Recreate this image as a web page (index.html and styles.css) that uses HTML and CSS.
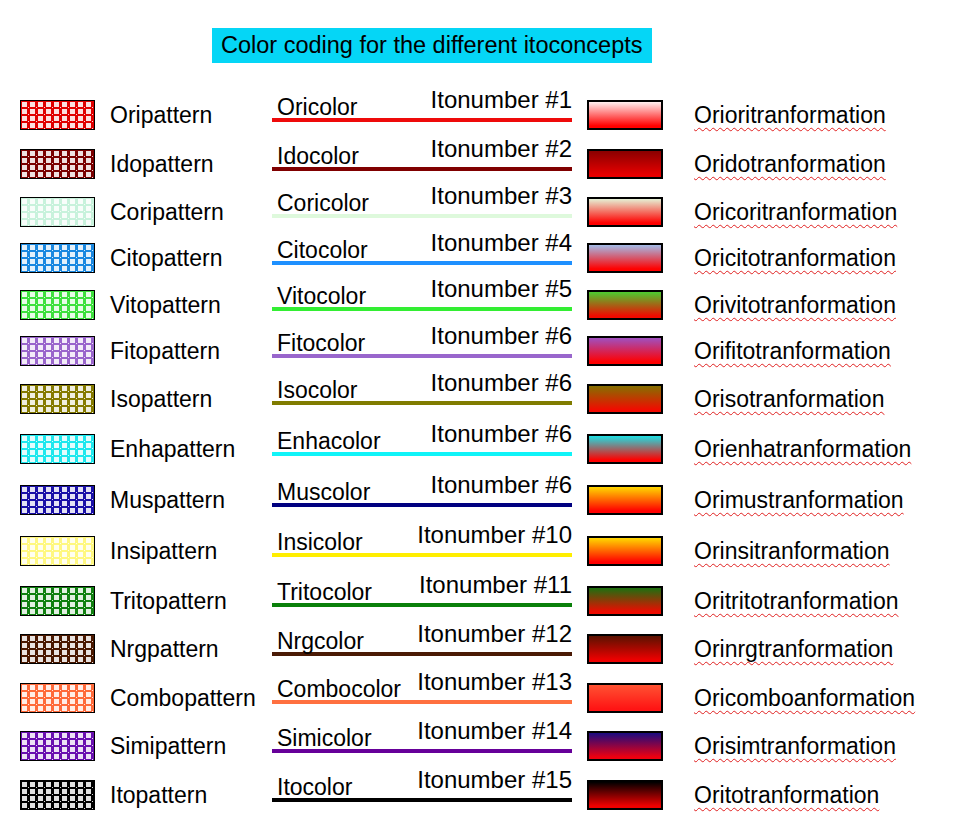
FILE: index.html
```html
<!DOCTYPE html>
<html lang="en">
<head>
<meta charset="utf-8">
<title>Color coding for the different itoconcepts</title>
<link rel="stylesheet" href="styles.css">
</head>
<body>
<div class="page">
  <h1 class="title">Color coding for the different itoconcepts</h1>
  <div class="legend">
    <div class="row c-ori"><div class="pat"></div><div class="name">Oripattern</div><div class="mid"><span class="cname">Oricolor</span><span class="num">Itonumber #1</span></div><div class="gcell"><div class="grad"></div></div><div class="tr">Orioritranformation</div></div>
    <div class="row c-ido"><div class="pat"></div><div class="name">Idopattern</div><div class="mid"><span class="cname">Idocolor</span><span class="num">Itonumber #2</span></div><div class="gcell"><div class="grad"></div></div><div class="tr">Oridotranformation</div></div>
    <div class="row c-cori"><div class="pat"></div><div class="name">Coripattern</div><div class="mid"><span class="cname">Coricolor</span><span class="num">Itonumber #3</span></div><div class="gcell"><div class="grad"></div></div><div class="tr">Oricoritranformation</div></div>
    <div class="row c-cito"><div class="pat"></div><div class="name">Citopattern</div><div class="mid"><span class="cname">Citocolor</span><span class="num">Itonumber #4</span></div><div class="gcell"><div class="grad"></div></div><div class="tr">Oricitotranformation</div></div>
    <div class="row c-vito"><div class="pat"></div><div class="name">Vitopattern</div><div class="mid"><span class="cname">Vitocolor</span><span class="num">Itonumber #5</span></div><div class="gcell"><div class="grad"></div></div><div class="tr">Orivitotranformation</div></div>
    <div class="row c-fito"><div class="pat"></div><div class="name">Fitopattern</div><div class="mid"><span class="cname">Fitocolor</span><span class="num">Itonumber #6</span></div><div class="gcell"><div class="grad"></div></div><div class="tr">Orifitotranformation</div></div>
    <div class="row c-iso"><div class="pat"></div><div class="name">Isopattern</div><div class="mid"><span class="cname">Isocolor</span><span class="num">Itonumber #6</span></div><div class="gcell"><div class="grad"></div></div><div class="tr">Orisotranformation</div></div>
    <div class="row c-enha"><div class="pat"></div><div class="name">Enhapattern</div><div class="mid"><span class="cname">Enhacolor</span><span class="num">Itonumber #6</span></div><div class="gcell"><div class="grad"></div></div><div class="tr">Orienhatranformation</div></div>
    <div class="row c-mus"><div class="pat"></div><div class="name">Muspattern</div><div class="mid"><span class="cname">Muscolor</span><span class="num">Itonumber #6</span></div><div class="gcell"><div class="grad"></div></div><div class="tr">Orimustranformation</div></div>
    <div class="row c-insi"><div class="pat"></div><div class="name">Insipattern</div><div class="mid"><span class="cname">Insicolor</span><span class="num">Itonumber #10</span></div><div class="gcell"><div class="grad"></div></div><div class="tr">Orinsitranformation</div></div>
    <div class="row c-trito"><div class="pat"></div><div class="name">Tritopattern</div><div class="mid"><span class="cname">Tritocolor</span><span class="num">Itonumber #11</span></div><div class="gcell"><div class="grad"></div></div><div class="tr">Oritritotranformation</div></div>
    <div class="row c-nrg"><div class="pat"></div><div class="name">Nrgpattern</div><div class="mid"><span class="cname">Nrgcolor</span><span class="num">Itonumber #12</span></div><div class="gcell"><div class="grad"></div></div><div class="tr">Orinrgtranformation</div></div>
    <div class="row c-combo"><div class="pat"></div><div class="name">Combopattern</div><div class="mid"><span class="cname">Combocolor</span><span class="num">Itonumber #13</span></div><div class="gcell"><div class="grad"></div></div><div class="tr">Oricomboanformation</div></div>
    <div class="row c-simi"><div class="pat"></div><div class="name">Simipattern</div><div class="mid"><span class="cname">Simicolor</span><span class="num">Itonumber #14</span></div><div class="gcell"><div class="grad"></div></div><div class="tr">Orisimtranformation</div></div>
    <div class="row c-ito"><div class="pat"></div><div class="name">Itopattern</div><div class="mid"><span class="cname">Itocolor</span><span class="num">Itonumber #15</span></div><div class="gcell"><div class="grad"></div></div><div class="tr">Oritotranformation</div></div>
  </div>
</div>
</body>
</html>
```

FILE: styles.css
```css
html, body {
  margin: 0;
  background: #ffffff;
}

body {
  font-family: "Liberation Sans", Arial, Helvetica, sans-serif;
  color: #000;
}

.page {
  padding-top: 28px;
}

.title {
  margin: 0 0 27px 212px;
  width: 440px;
  height: 35px;
  box-sizing: border-box;
  padding-left: 9px;
  background: #05d6f6;
  font-size: 23.5px;
  font-weight: normal;
  line-height: 35px;
  white-space: nowrap;
}

.legend {
  display: grid;
  margin-left: 20px;
  grid-template-columns: 75px 177px 300px 122px 1fr;
  grid-template-rows: 50px 48px 47px 46px 47px 46px 49px 52px 50px 51px 49px 48px 49px 48px 50px;
  align-items: center;
  font-size: 23px;
}

.row {
  display: contents;
}

/* left: patterned swatch */
.pat {
  width: 75px;
  height: 30px;
  box-sizing: border-box;
  border: 1px solid #000;
  background-color: #fff;
  background-image:
    radial-gradient(circle at 6.5px 5.5px, rgba(255,255,255,0.85) 0 0.8px, transparent 1px),
    conic-gradient(from 0deg at 5px 5px, var(--p) 0 75%, color-mix(in srgb, var(--p) 12%, white) 75% 100%);
  background-size: 8px 7px, 8px 7px;
  background-position: 1px 1px, 1px 1px;
}

.name {
  padding-left: 15px;
  line-height: 26px;
  white-space: nowrap;
}

/* middle: colour line with labels */
.mid {
  display: flex;
  justify-content: space-between;
  height: 29px;
  padding-left: 5px;
  border-bottom: 4px solid var(--l);
  margin-bottom: 20px;
  white-space: nowrap;
}

.cname {
  align-self: flex-end;
  line-height: 22px;
}

.num {
  align-self: flex-start;
  font-size: 24px;
  line-height: 22px;
}

/* right: gradient swatch */
.gcell {
  padding-left: 15px;
}

.grad {
  width: 76px;
  height: 30px;
  box-sizing: border-box;
  border: 2px solid #000;
  background: linear-gradient(180deg, var(--g) 0%, var(--b, #ff0000) 92%);
}

.tr {
  padding-left: 0;
  line-height: 26px;
  white-space: nowrap;
  text-decoration: underline wavy #e02020;
  text-decoration-thickness: 1px;
  text-underline-offset: 4px;
  text-decoration-skip-ink: none;
}

/* per-concept colours */
.c-ori   { --p: #e00000; --l: #ee0a0a; --g: #fff0f0; }
.c-ido   { --p: #7a0000; --l: #800000; --g: #8a0000; --b: #e80000; }
.c-cori  { --p: #c8f2dc; --l: #def9dc; --g: #e6f0d4; }
.c-cito  { --p: #1a88e0; --l: #1e90ff; --g: #a4bce8; }
.c-vito  { --p: #3ee03e; --l: #33ee33; --g: #4ccc30; --b: #f00a00; }
.c-fito  { --p: #9a66cc; --l: #9966cc; --g: #a050c0; }
.c-iso   { --p: #857a00; --l: #807c00; --g: #857000; --b: #f20a00; }
.c-enha  { --p: #1ee8ee; --l: #10f4f8; --g: #1ee0e4; }
.c-mus   { --p: #1a10a8; --l: #000080; --g: #ffd800; }
.c-insi  { --p: #fff880; --l: #ffee00; --g: #ffd800; }
.c-trito { --p: #108010; --l: #0a800a; --g: #1c7010; --b: #ee0a00; }
.c-nrg   { --p: #4a1800; --l: #4a1a05; --g: #5a1200; --b: #ee0000; }
.c-combo { --p: #ff6a3a; --l: #ff7040; --g: #ff5232; --b: #ff1414; }
.c-simi  { --p: #6a10b0; --l: #660099; --g: #1a0a80; --b: #ee0010; }
.c-ito   { --p: #000000; --l: #000000; --g: #000000; --b: #ee0000; }
```
